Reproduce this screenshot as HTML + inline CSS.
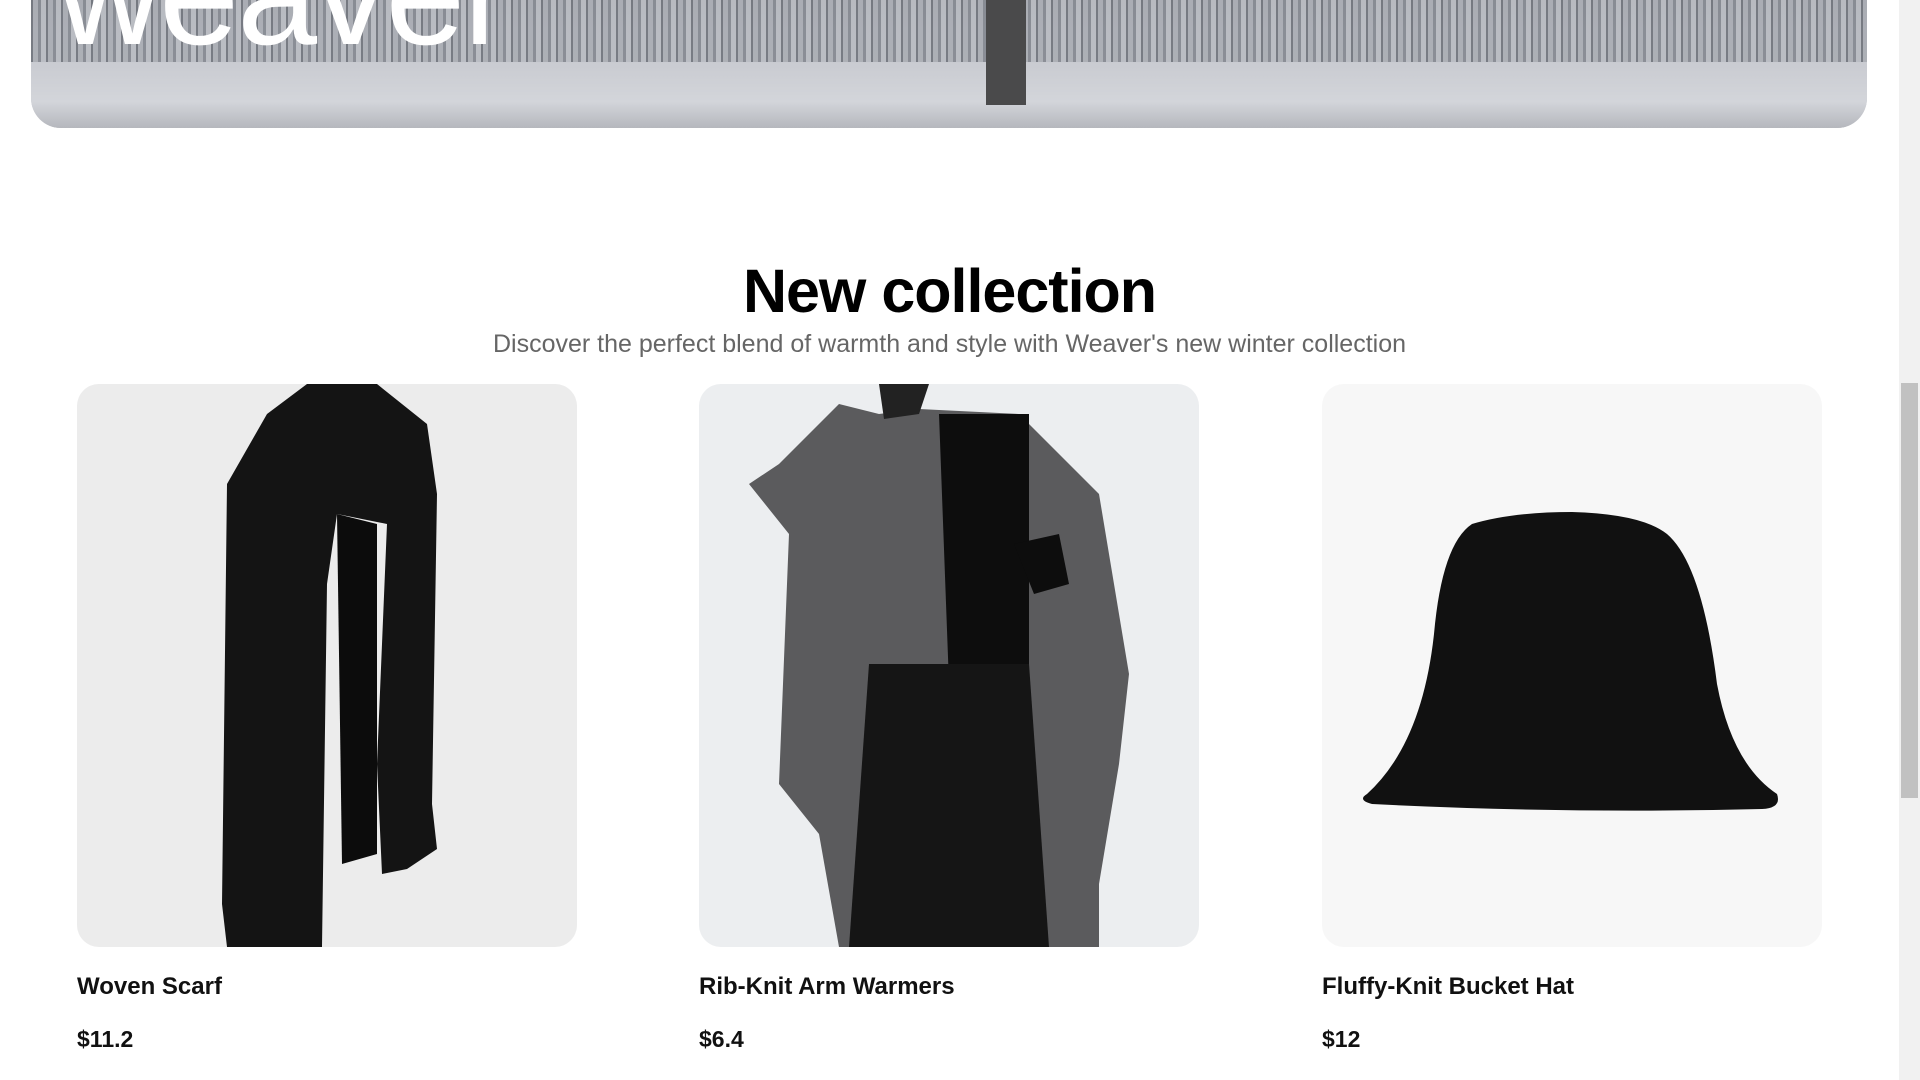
<!DOCTYPE html>
<html><head><meta charset="utf-8"><style>
*{margin:0;padding:0;box-sizing:border-box}
html,body{width:1920px;height:1080px;overflow:hidden;background:#fff;font-family:"Liberation Sans",sans-serif}
.hero{position:absolute;left:31px;top:-200px;width:1836px;height:328px;border-radius:0 0 30px 30px;overflow:hidden;
background:linear-gradient(180deg,#8a8e96 0%,#a0a3aa 50%,#b5b7bd 62%,#c3c5cc 70%,#cbcdd3 85%,#b9bbc1 100%)}
.hero .trees{position:absolute;left:0;right:0;top:150px;height:120px;background:repeating-linear-gradient(90deg,#6a6e76 0 2px,#a8abb2 2px 7px,#80848c 7px 10px,#b8bbc1 10px 15px);opacity:.85}
.hero .snow{position:absolute;left:0;right:0;top:262px;height:66px;background:linear-gradient(180deg,#c9cbd1,#d3d5da 60%,#b5b7bd)}
.hero .trunk{position:absolute;left:955px;top:150px;width:40px;height:155px;background:#4a4a4b}
.hero h1{position:absolute;left:26px;top:123px;font-size:144px;font-weight:400;color:#fff;letter-spacing:-2px;line-height:1}
.sb{position:absolute;right:0;top:0;width:21px;height:1080px;background:#f1f1f1}
.sb .th{position:absolute;left:2px;width:17px;top:383px;height:415px;background:#c1c1c1}
h2{position:absolute;left:0;width:1899px;top:256px;text-align:center;font-size:61px;font-weight:700;color:#000;letter-spacing:-1px}
.sub{position:absolute;left:0;width:1899px;top:330px;text-align:center;font-size:25px;color:#666}
.card{position:absolute;top:384px;width:500px;height:563px;border-radius:22px;overflow:hidden}
.name{position:absolute;top:973px;font-size:24px;font-weight:700;color:#111}
.price{position:absolute;top:1026px;font-size:23px;font-weight:700;color:#111}
</style></head><body>
<div class="hero"><div class="trees"></div><div class="snow"></div><div class="trunk"></div><h1>weaver</h1></div>
<h2>New collection</h2>
<div class="sub">Discover the perfect blend of warmth and style with Weaver's new winter collection</div>

<div class="card" style="left:77px;background:#ececec">
<svg width="500" height="563"><path d="M230 0 L300 0 L350 40 L360 110 L355 420 L360 465 L330 485 L305 490 L300 380 L310 140 L260 130 L250 200 L245 563 L150 563 L145 520 L150 100 L190 30 Z" fill="#141414"/><path d="M260 130 L300 140 L300 470 L265 480 Z" fill="#0c0c0c"/></svg></div>

<div class="card" style="left:699px;background:#eceef0">
<svg width="500" height="563"><path d="M80 80 L140 20 L180 30 L220 25 L320 30 L400 110 L430 290 L420 380 L400 500 L400 563 L140 563 L120 450 L80 400 L90 150 L50 100 Z" fill="#5b5b5d"/><path d="M240 30 L330 30 L330 300 L250 300 Z" fill="#0d0d0d"/><path d="M150 563 L170 280 L330 280 L350 563 Z" fill="#151515"/><path d="M180 0 L230 0 L220 30 L185 35 Z" fill="#222"/><path d="M315 160 L360 150 L370 200 L335 210 Z" fill="#0d0d0d"/></svg></div>

<div class="card" style="left:1322px;background:#f7f7f7">
<svg width="500" height="563"><path d="M45 410 Q100 360 112 250 Q120 160 150 140 Q190 128 250 128 Q320 130 345 150 Q380 180 395 300 Q410 380 455 410 Q460 424 440 425 Q250 430 50 420 Q35 416 45 410Z" fill="#111"/></svg></div>

<div class="name" style="left:77px">Woven Scarf</div><div class="price" style="left:77px">$11.2</div>
<div class="name" style="left:699px">Rib-Knit Arm Warmers</div><div class="price" style="left:699px">$6.4</div>
<div class="name" style="left:1322px">Fluffy-Knit Bucket Hat</div><div class="price" style="left:1322px">$12</div>
<div class="sb"><div class="th"></div></div>
</body></html>
